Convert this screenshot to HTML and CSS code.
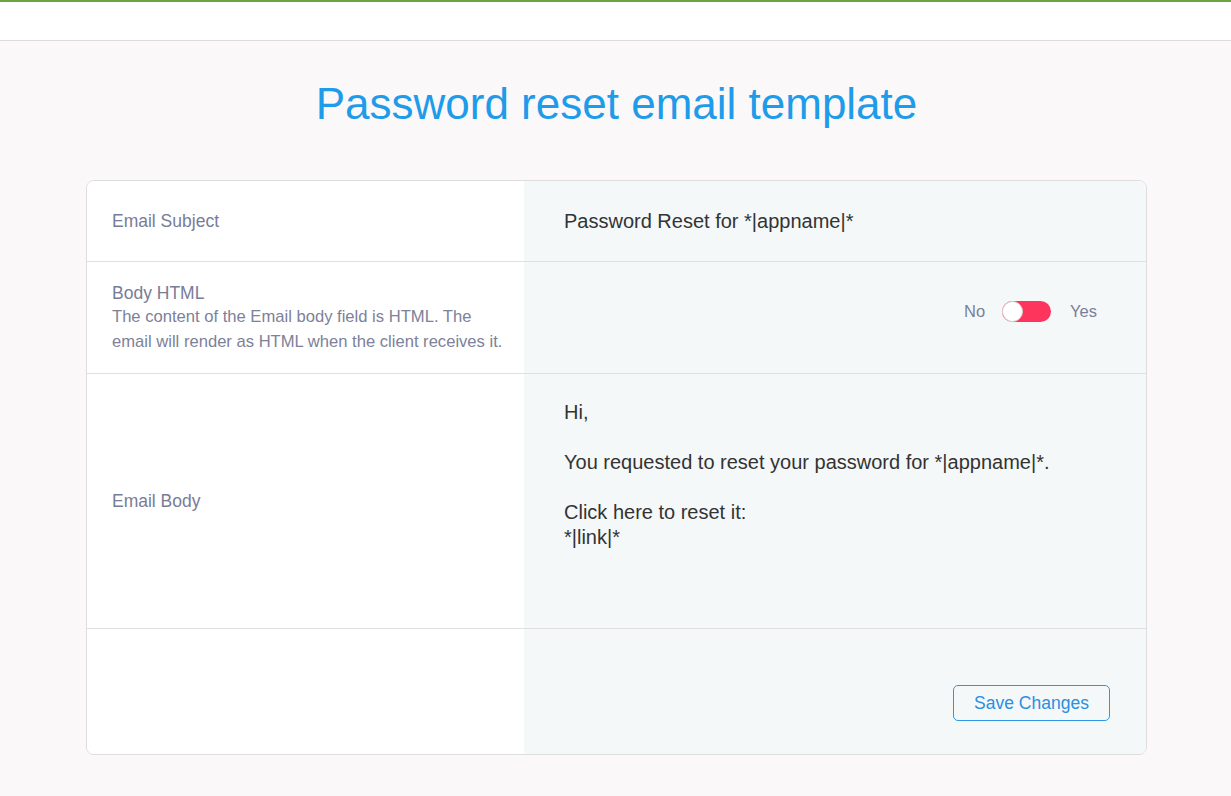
FILE: index.html
```html
<!DOCTYPE html>
<html lang="en">
<head>
<meta charset="utf-8">
<title>Password reset email template</title>
<link rel="stylesheet" href="styles.css">
</head>
<body>
<header class="topbar"></header>
<main class="page">
  <h1 class="title">Password reset email template</h1>
  <section class="card">
    <div class="row row-subject">
      <div class="label-cell"><div class="label">Email Subject</div></div>
      <div class="value-cell"><div class="subject">Password Reset for *|appname|*</div></div>
    </div>
    <div class="row row-html">
      <div class="label-cell">
        <div class="label">Body HTML</div>
        <div class="desc">The content of the Email body field is HTML. The email will render as HTML when the client receives it.</div>
      </div>
      <div class="value-cell toggle-cell">
        <span class="opt">No</span>
        <span class="switch"><span class="knob"></span></span>
        <span class="opt">Yes</span>
      </div>
    </div>
    <div class="row row-body">
      <div class="label-cell"><div class="label">Email Body</div></div>
      <div class="value-cell body-cell">
        <p class="line">Hi,</p>
        <p class="line">&nbsp;</p>
        <p class="line">You requested to reset your password for *|appname|*.</p>
        <p class="line">&nbsp;</p>
        <p class="line">Click here to reset it:</p>
        <p class="line">*|link|*</p>
      </div>
    </div>
    <div class="row row-actions">
      <div class="label-cell"></div>
      <div class="value-cell action-cell">
        <button class="save" type="button">Save Changes</button>
      </div>
    </div>
  </section>
</main>
</body>
</html>
```

FILE: styles.css
```css
* { box-sizing: border-box; }
html, body { margin: 0; padding: 0; }
body {
  font-family: "Liberation Sans", Arial, sans-serif;
  background: #faf8f9;
  color: #333;
  min-height: 796px;
}
.topbar {
  height: 41px;
  background: #fff;
  border-top: 2px solid #6ca443;
  border-bottom: 1px solid #dcdcdc;
}
.page {
  padding: 0 84px 40px 86px;
}
.title {
  margin: 0;
  padding: 37px 0 50px;
  text-align: center;
  font-weight: normal;
  font-size: 44px;
  line-height: 52px;
  color: #1e9be9;
}
.card {
  border: 1px solid #dedede;
  border-radius: 8px;
  overflow: hidden;
  background: #fff;
}
.row {
  display: grid;
  grid-template-columns: 437px 1fr;
  border-top: 1px solid #e0e0e0;
}
.row:first-child { border-top: none; }
.row-subject { height: 80px; }
.row-html { height: 112px; }
.row-body { height: 255px; }
.row-actions { height: 126px; }
.label-cell {
  display: flex;
  flex-direction: column;
  justify-content: center;
  padding: 0 14px 0 25px;
  background: #fff;
}
.label {
  font-size: 17.5px;
  line-height: 22px;
  color: #787d96;
}
.desc {
  font-size: 16.6px;
  line-height: 25px;
  color: #7d8199;
}
.value-cell {
  background: #f5f8f9;
  display: flex;
  align-items: center;
  padding: 0 40px;
}
.subject {
  font-size: 20px;
  color: #333;
}
.toggle-cell {
  justify-content: flex-end;
  padding-right: 49px;
  padding-bottom: 12px;
}
.opt {
  font-size: 16.5px;
  color: #7a7f98;
}
.switch {
  width: 49px;
  height: 21px;
  margin: 0 19px 0 17px;
  border-radius: 11px;
  background: #fd355c;
  display: flex;
  align-items: center;
}
.knob {
  width: 21px;
  height: 21px;
  border-radius: 50%;
  background: #fff;
  border: 1px solid #d5d5d5;
}
.body-cell {
  flex-direction: column;
  align-items: flex-start;
  padding-top: 26px;
}
.line {
  margin: 0;
  font-size: 20px;
  line-height: 25px;
  color: #333;
}
.action-cell {
  justify-content: flex-end;
  align-items: flex-end;
  padding: 0 36px 33px 0;
}
.save {
  width: 157px;
  height: 36px;
  background: transparent;
  border: 1px solid #2f98e4;
  border-radius: 5px;
  font-family: "Liberation Sans", Arial, sans-serif;
  font-size: 17.5px;
  color: #2a8fe0;
  cursor: pointer;
}
```
